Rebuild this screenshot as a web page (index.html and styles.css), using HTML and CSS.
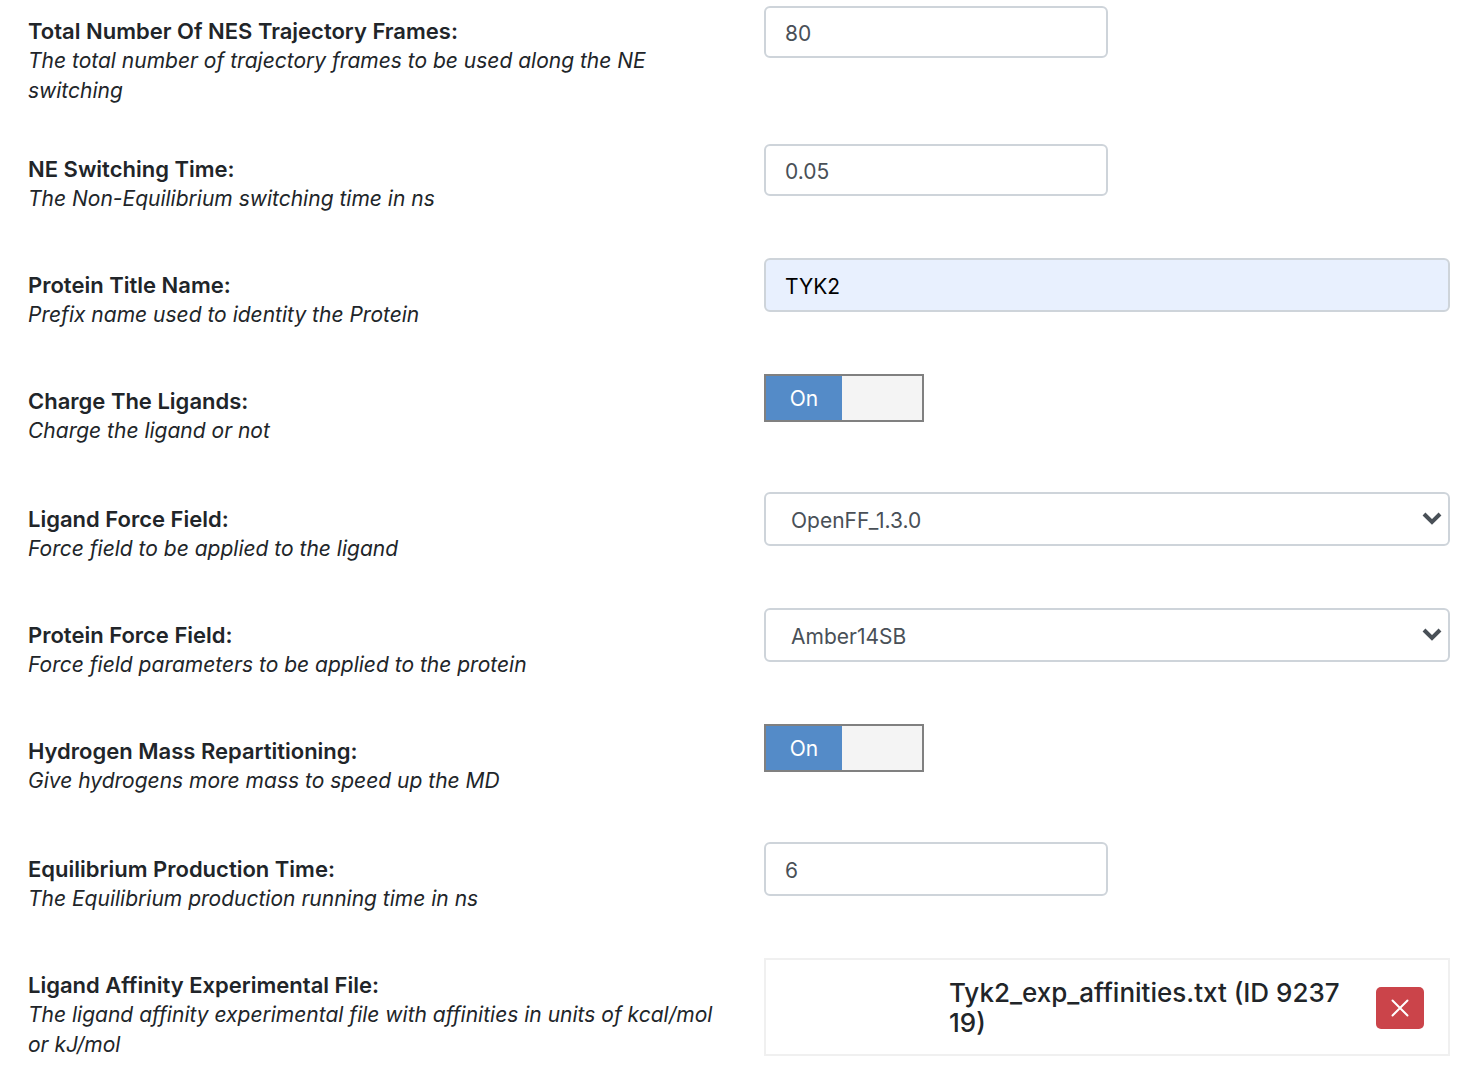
FILE: index.html
```html
<!DOCTYPE html>
<html lang="en">
<head>
<meta charset="utf-8">
<meta name="viewport" content="width=device-width, initial-scale=1">
<title>Job parameters</title>
<link rel="stylesheet" href="styles.css">
</head>
<body>
<form class="params">
  <div class="row">
    <div class="info"><label class="name" for="frames">Total Number Of NES Trajectory Frames:</label><p class="help">The total number of trajectory frames to be used along the NE switching</p></div>
    <div class="field"><input class="control short compact" id="frames" type="text" value="80"></div>
  </div>
  <div class="row">
    <div class="info"><label class="name" for="switching">NE Switching Time:</label><p class="help">The Non-Equilibrium switching time in ns</p></div>
    <div class="field"><input class="control short compact" id="switching" type="text" value="0.05"></div>
  </div>
  <div class="row">
    <div class="info"><label class="name" for="title">Protein Title Name:</label><p class="help">Prefix name used to identity the Protein</p></div>
    <div class="field"><input class="control filled" id="title" type="text" value="TYK2"></div>
  </div>
  <div class="row row-switch">
    <div class="info"><label class="name" for="charge">Charge The Ligands:</label><p class="help">Charge the ligand or not</p></div>
    <div class="field"><label class="switch"><input class="switch-box" id="charge" type="checkbox" checked><span class="switch-on">On</span></label></div>
  </div>
  <div class="row">
    <div class="info"><label class="name" for="ligand-ff">Ligand Force Field:</label><p class="help">Force field to be applied to the ligand</p></div>
    <div class="field select-wrap"><select class="control select" id="ligand-ff"><option>OpenFF_1.3.0</option></select><svg class="chevron" viewBox="0 0 20 14" aria-hidden="true"><path d="M2 2l8 8 8-8"/></svg></div>
  </div>
  <div class="row">
    <div class="info"><label class="name" for="protein-ff">Protein Force Field:</label><p class="help">Force field parameters to be applied to the protein</p></div>
    <div class="field select-wrap"><select class="control select" id="protein-ff"><option>Amber14SB</option></select><svg class="chevron" viewBox="0 0 20 14" aria-hidden="true"><path d="M2 2l8 8 8-8"/></svg></div>
  </div>
  <div class="row row-switch">
    <div class="info"><label class="name" for="hmr">Hydrogen Mass Repartitioning:</label><p class="help">Give hydrogens more mass to speed up the MD</p></div>
    <div class="field"><label class="switch"><input class="switch-box" id="hmr" type="checkbox" checked><span class="switch-on">On</span></label></div>
  </div>
  <div class="row">
    <div class="info"><label class="name" for="production">Equilibrium Production Time:</label><p class="help">The Equilibrium production running time in ns</p></div>
    <div class="field"><input class="control short" id="production" type="text" value="6"></div>
  </div>
  <div class="row">
    <div class="info"><span class="name">Ligand Affinity Experimental File:</span><p class="help">The ligand affinity experimental file with affinities in units of kcal/mol or kJ/mol</p></div>
    <div class="field file"><span class="file-name">Tyk2_exp_affinities.txt (ID 923719)</span><button class="remove" type="button" aria-label="Remove file"><svg class="cross" viewBox="0 0 18 18" aria-hidden="true"><path d="M1.5 1.5l15 15M16.5 1.5l-15 15"/></svg></button></div>
  </div>
</form>
</body>
</html>
```
FILE: styles.css
```css
* { box-sizing: border-box; }

body {
  margin: 0;
  background: #fff;
  color: #212529;
  font: 21px/30px Inter, "Liberation Sans", sans-serif;
}

.params {
  display: grid;
  gap: 36px;
  padding: 4px 24px 8px 28px;
}

.row {
  display: grid;
  grid-template-columns: minmax(0, 1fr) calc(50% - 25px);
  column-gap: 44px;
  align-items: start;
  min-height: 80px;
}
.row-switch { min-height: 82px; }

.info { padding-top: 12px; }
.name { display: block; font-size: 22px; font-weight: 600; }
.help { margin: 0; font-style: italic; }

.control {
  display: block;
  width: 100%;
  height: 54px;
  padding: 2px 19px 0;
  border: 2px solid #ced4da;
  border-radius: 6px;
  background: #fff;
  color: #495057;
  font: inherit;
}

.short { max-width: 344px; }
.compact { height: 52px; margin-top: 2px; }
.filled { background: #e8f0fe; color: #000; }

.select-wrap { position: relative; }
.select { appearance: none; padding: 4px 32px 0 25px; }

.chevron {
  position: absolute;
  top: 20px;
  right: 8px;
  width: 20px;
  height: 14px;
  fill: none;
  stroke: #495057;
  stroke-width: 4;
  pointer-events: none;
}

.switch {
  position: relative;
  display: flex;
  width: 160px;
  height: 48px;
  border: 2px solid #808080;
  background: #f4f4f4;
}
.switch-box { position: absolute; inset: 0; margin: 0; opacity: 0; }
.switch-on { width: 76px; background: #548bc8; color: #fff; line-height: 46px; text-align: center; }

.file {
  display: flex;
  align-items: center;
  min-height: 98px;
  padding: 2px 24px 0 183px;
  border: 2px solid #f0f0f0;
}
.file-name {
  flex: 1;
  font-size: 26px;
  font-weight: 500;
  word-break: break-all;
}
.remove {
  width: 48px;
  height: 42px;
  margin-left: 28px;
  padding: 0;
  border: 0;
  border-radius: 5px;
  background: #cb444a;
}
.cross { display: block; width: 18px; height: 18px; margin: auto; fill: none; stroke: #fff; stroke-width: 2; stroke-linecap: round; }
```
